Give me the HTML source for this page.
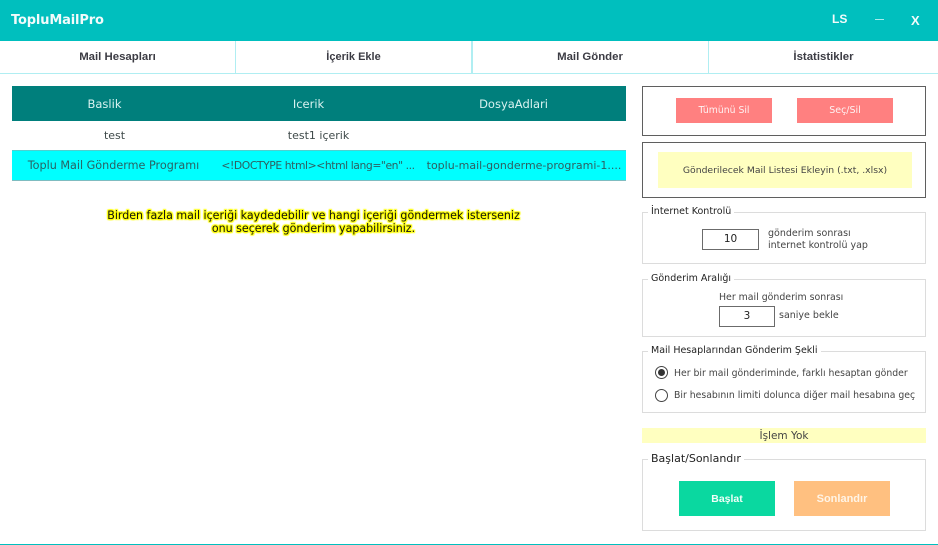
<!DOCTYPE html>
<html lang="tr">
<head>
<meta charset="utf-8">
<title>TopluMailPro</title>
<style>
html,body{margin:0;padding:0;background:#fff}
#p{position:relative;width:938px;height:545px;overflow:hidden;background:#fff;font-family:"DejaVu Sans","Liberation Sans",sans-serif;color:#333}
#p div{position:absolute;box-sizing:border-box;white-space:nowrap}
.c{text-align:center}
.tab{top:41px;height:32px;text-align:center;font:bold 11.4px/33px "Liberation Sans",sans-serif;color:#3c3c44}
.sep{top:41px;width:1px;height:32px;background:#b0eef2}
.th{top:86px;height:35px;line-height:36px;color:#d8f2f0;font-size:11.5px;text-align:center}
.td{font-size:11px;color:#3f4a4a;text-align:center}
.box{border:1px solid #5f5f5f;background:#fff}
.gb{border:1px solid #dcdcdc;background:#fff}
.lg{background:#fff;font-size:9.5px;color:#222;padding:0 3px;height:13px;line-height:13px}
.s{font-size:9.5px;color:#444;line-height:13px}
.inp{border:1px solid #6b6b6b;background:#fff;text-align:center;font-size:10.5px;color:#222}
.radio{width:13px;height:13px;border:1.3px solid #444;border-radius:50%;background:#fff}
.hl{font-size:11.05px;color:#111;height:13px;line-height:13px;text-shadow:0 0 1px #ff0,0 0 2px #ff0,1px 0 1px #ff0,-1px 0 1px #ff0,0 1px 1px #ff0,0 -1px 1px #ff0,1px 1px 1px #ff0,-1px -1px 1px #ff0,1px -1px 1px #ff0,-1px 1px 1px #ff0}
</style>
</head>
<body>
<div id="p">
  <div style="left:0;top:0;width:938px;height:41px;background:#00bfbe"></div>
  <div style="left:11px;top:12px;font:bold 13px/18px 'DejaVu Sans',sans-serif;letter-spacing:-.15px;color:#f2fbfb">TopluMailPro</div>
  <div style="left:832px;top:11px;font:bold 12px/17px 'Liberation Sans',sans-serif;color:#f2fbfb">LS</div>
  <div style="left:875px;top:19px;width:9px;height:1px;background:#a8ecec"></div>
  <div style="left:911px;top:12px;font:bold 13px/17px 'Liberation Sans',sans-serif;color:#f2fbfb">X</div>

  <div class="tab" style="left:0;width:235px">Mail Hesapları</div>
  <div class="tab" style="left:236px;width:235px;font-size:11px">İçerik Ekle</div>
  <div class="tab" style="left:472px;width:236px">Mail Gönder</div>
  <div class="tab" style="left:709px;width:229px">İstatistikler</div>
  <div class="sep" style="left:235px"></div>
  <div class="sep" style="left:471px;width:2px"></div>
  <div class="sep" style="left:708px"></div>
  <div style="left:0;top:73px;width:938px;height:1px;background:#b0eef2"></div>

  <div style="left:12px;top:86px;width:614px;height:35px;background:#007f7c"></div>
  <div class="th" style="left:12px;width:185px">Baslik</div>
  <div class="th" style="left:216px;width:185px">Icerik</div>
  <div class="th" style="left:421px;width:185px">DosyaAdlari</div>

  <div class="td" style="left:22px;width:185px;top:128px;line-height:15px">test</div>
  <div class="td" style="left:226px;width:185px;top:128px;line-height:15px">test1 içerik</div>

  <div style="left:12px;top:150px;width:614px;height:31px;background:#00ffff;border-top:1px solid #4fd0d0;border-bottom:1px solid #7fbcc0"></div>
  <div class="td" style="left:21px;width:185px;top:158px;line-height:15px;color:#2a6263;font-size:11.2px">Toplu Mail Gönderme Programı</div>
  <div class="td" style="left:218px;width:200px;top:158px;line-height:15px;color:#2f5f60;font-size:10.8px;letter-spacing:-.43px">&lt;!DOCTYPE html&gt;&lt;html lang="en" ...</div>
  <div class="td" style="left:424px;width:200px;top:158px;line-height:15px;color:#2f5f60;font-size:11px">toplu-mail-gonderme-programi-1....</div>

  <div class="c hl" style="left:0;top:209px;width:627px">Birden fazla mail içeriği kaydedebilir ve hangi içeriği göndermek isterseniz</div>
  <div class="c hl" style="left:0;top:222px;width:627px">onu seçerek gönderim yapabilirsiniz.</div>

  <div class="box" style="left:642px;top:86px;width:284px;height:50px"></div>
  <div class="c" style="left:676px;top:98px;width:96px;height:25px;line-height:25px;background:#ff8080;color:#fff2f2;font-size:9.3px">Tümünü Sil</div>
  <div class="c" style="left:797px;top:98px;width:96px;height:25px;line-height:25px;background:#ff8080;color:#fff2f2;font-size:9.5px">Seç/Sil</div>

  <div class="box" style="left:642px;top:142px;width:284px;height:56px"></div>
  <div class="c" style="left:658px;top:152px;width:254px;height:36px;line-height:37px;background:#ffffc0;color:#444;font-size:9.25px">Gönderilecek Mail Listesi Ekleyin (.txt, .xlsx)</div>

  <div class="gb" style="left:642px;top:212px;width:284px;height:52px"></div>
  <div class="lg" style="left:648px;top:205px">İnternet Kontrolü</div>
  <div class="inp" style="left:702px;top:229px;width:57px;height:21px;line-height:19px">10</div>
  <div class="s" style="left:768px;top:227px">gönderim sonrası</div>
  <div class="s" style="left:768px;top:239px">internet kontrolü yap</div>

  <div class="gb" style="left:642px;top:279px;width:284px;height:58px"></div>
  <div class="lg" style="left:648px;top:272px">Gönderim Aralığı</div>
  <div class="s" style="left:719px;top:291px;font-size:9.4px">Her mail gönderim sonrası</div>
  <div class="inp" style="left:719px;top:306px;width:56px;height:21px;line-height:19px">3</div>
  <div class="s" style="left:779px;top:309px">saniye bekle</div>

  <div class="gb" style="left:642px;top:351px;width:284px;height:62px"></div>
  <div class="lg" style="left:648px;top:344px">Mail Hesaplarından Gönderim Şekli</div>
  <div class="radio" style="left:655px;top:366px"></div>
  <div style="left:658px;top:369px;width:7px;height:7px;border-radius:50%;background:#333"></div>
  <div class="s" style="left:674px;top:367px;font-size:9.3px">Her bir mail gönderiminde, farklı hesaptan gönder</div>
  <div class="radio" style="left:655px;top:389px"></div>
  <div class="s" style="left:674px;top:389px;font-size:9.3px">Bir hesabının limiti dolunca diğer mail hesabına geç</div>

  <div class="c" style="left:642px;top:428px;width:284px;height:15px;line-height:16px;background:#ffffc0;color:#444;font-size:10.5px">İşlem Yok</div>

  <div class="gb" style="left:642px;top:459px;width:284px;height:72px"></div>
  <div class="lg" style="left:648px;top:452px;font-size:11px">Başlat/Sonlandır</div>
  <div class="c" style="left:679px;top:481px;width:96px;height:35px;line-height:36px;background:#0ad8a0;color:#f0fff8;font-size:10.5px;font-weight:bold;font-family:'Liberation Sans',sans-serif">Başlat</div>
  <div class="c" style="left:794px;top:481px;width:96px;height:35px;line-height:36px;background:#ffc080;color:#fff4e6;font-size:11px;font-weight:bold;font-family:'Liberation Sans',sans-serif">Sonlandır</div>

  <div style="left:0;top:544px;width:938px;height:1px;background:#00bfbe"></div>
</div>
</body>
</html>
